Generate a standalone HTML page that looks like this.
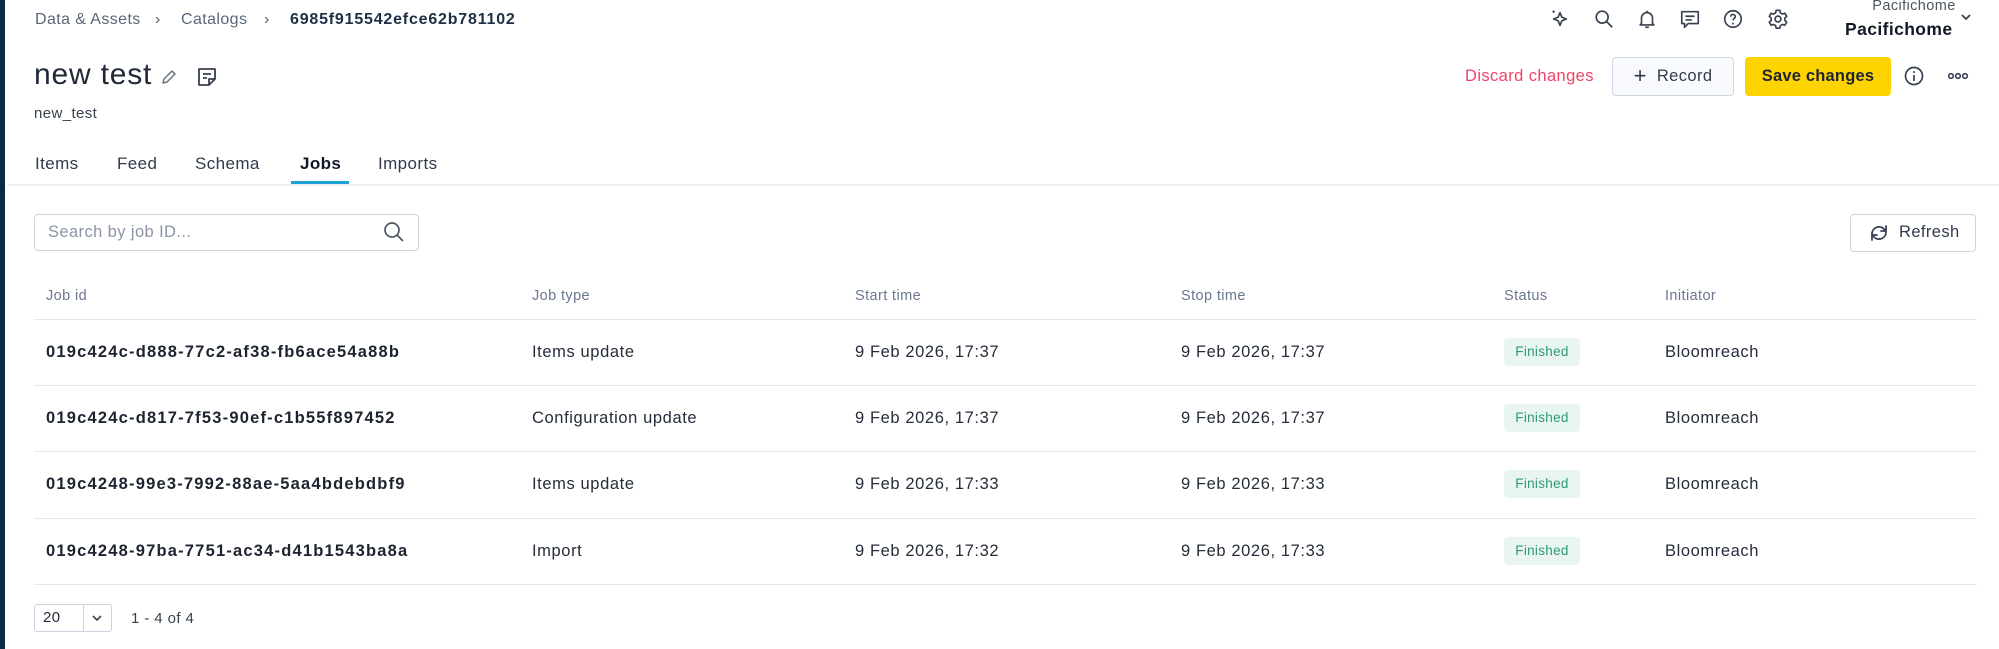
<!DOCTYPE html>
<html><head><meta charset="utf-8"><style>
*{box-sizing:border-box;margin:0;padding:0}
body{width:1999px;height:649px;background:#fff;font-family:"Liberation Sans",sans-serif;color:#1f2937;position:relative;overflow:hidden;letter-spacing:0.4px}
.a{position:absolute;white-space:nowrap}
.bar{left:0;top:0;width:5px;height:649px;background:#0d2a45}
.bc{top:11px;font-size:16px;color:#5b6678}
.ic{position:absolute;top:8px;width:22px;height:22px}
.tab{top:154px;font-size:17px;color:#2f3b4c}
.th{top:288px;font-size:14.5px;color:#6b7790}
.td{font-size:16.5px;color:#252d3a;letter-spacing:0.6px}
.id{font-weight:bold;font-size:16.5px;color:#1d2430;letter-spacing:1.2px}
.line{height:1px;background:#e3e8f0;left:34px;width:1943px}
.badge{left:1504px;width:76px;height:28px;background:#e9f5f1;border-radius:4px;color:#2e9a74;font-size:13.5px;text-align:center;line-height:28px;letter-spacing:0.3px}
</style></head><body>
<div class="a bar"></div>
<div class="a bc" style="left:35px">Data &amp; Assets</div>
<div class="a bc" style="left:155px">›</div>
<div class="a bc" style="left:181px">Catalogs</div>
<div class="a bc" style="left:264px">›</div>
<div class="a bc" style="left:290px;color:#1e2f45;font-weight:bold;letter-spacing:0.8px">6985f915542efce62b781102</div>

<svg class="ic" style="left:1549px" viewBox="0 0 24 24" fill="none" stroke="#374151" stroke-width="1.8" stroke-linejoin="round"><path d="M14 6l2 5 5 2-5 2-2 5-2-5-5-2 5-2z" transform="translate(-2,-1)"/><circle cx="5" cy="4" r="1.3" fill="#374151" stroke="none"/></svg>
<svg class="ic" style="left:1593px" viewBox="0 0 24 24" fill="none" stroke="#374151" stroke-width="1.8"><circle cx="10" cy="10" r="6.5"/><path d="M15 15l6 6"/></svg>
<svg class="ic" style="left:1636px" viewBox="0 0 24 24" fill="none" stroke="#374151" stroke-width="1.8" stroke-linejoin="round"><path d="M6 17V11a6 6 0 0112 0v6l1.5 1.5h-15z"/><path d="M10 21h4"/><path d="M12 3v2"/></svg>
<svg class="ic" style="left:1679px" viewBox="0 0 24 24" fill="none" stroke="#374151" stroke-width="1.8" stroke-linejoin="round"><path d="M3 4h18v13H10l-4 4v-4H3z"/><path d="M7 9h10M7 13h7"/></svg>
<svg class="ic" style="left:1722px" viewBox="0 0 24 24" fill="none" stroke="#374151" stroke-width="1.8"><circle cx="12" cy="12" r="9"/><path d="M9.5 9.5a2.5 2.5 0 115 0c0 2-2.5 2-2.5 4"/><circle cx="12" cy="17" r="1" fill="#374151" stroke="none"/></svg>
<svg class="ic" style="left:1767px" viewBox="0 0 24 24" fill="none" stroke="#374151" stroke-width="1.8" stroke-linejoin="round"><path d="M10 2.5h4l.6 2.8 2.2 1.3 2.7-.9 2 3.4-2.1 1.9v2.5l2.1 1.9-2 3.4-2.7-.9-2.2 1.3-.6 2.8h-4l-.6-2.8-2.2-1.3-2.7.9-2-3.4 2.1-1.9v-2.5L2.5 9.1l2-3.4 2.7.9 2.2-1.3z"/><circle cx="12" cy="12" r="3.2"/></svg>

<div class="a" style="left:1864px;top:-2px;font-size:14.5px;color:#4b5563;width:100px;text-align:center">Pacifichome</div>
<div class="a" style="left:1845px;top:19px;font-size:17.5px;font-weight:bold;color:#111827">Pacifichome</div>
<svg class="a" style="left:1959px;top:12px" width="14" height="10" viewBox="0 0 14 10" fill="none" stroke="#374151" stroke-width="1.8"><path d="M3 3l4 4 4-4"/></svg>

<div class="a" style="left:34px;top:58px;font-size:30px;color:#1f2937;letter-spacing:0.8px">new test</div>
<svg class="a" style="left:160px;top:68px" width="18" height="18" viewBox="0 0 18 18" fill="none" stroke="#6b7280" stroke-width="1.5" stroke-linejoin="round"><path d="M3 15l1-4 8-8 3 3-8 8z"/></svg>
<svg class="a" style="left:196px;top:66px" width="22" height="22" viewBox="0 0 22 22" fill="none" stroke="#374151" stroke-width="1.8" stroke-linejoin="round"><path d="M3 3h16v10l-6 6H3z"/><path d="M13 19v-6h6M7 8h8M7 12h4"/></svg>
<div class="a" style="left:34px;top:105px;font-size:15px;color:#374151">new_test</div>

<div class="a" style="left:1465px;top:67px;font-size:16.5px;color:#ef4469">Discard changes</div>
<div class="a" style="left:1612px;top:57px;width:122px;height:39px;border:1.5px solid #cfd6e4;border-radius:4px;background:#f8fafd;font-size:16.5px;color:#2f3b4c;line-height:36px;text-align:center"><span style="font-size:22px;vertical-align:-2px;margin-right:10px">+</span>Record</div>
<div class="a" style="left:1745px;top:57px;width:146px;height:39px;border-radius:4px;background:#fdd300;font-size:16.5px;font-weight:bold;color:#1f2430;line-height:39px;text-align:center;letter-spacing:0.2px">Save changes</div>
<svg class="a" style="left:1903px;top:65px" width="22" height="22" viewBox="0 0 22 22" fill="none" stroke="#374151" stroke-width="1.7"><circle cx="11" cy="11" r="8.5"/><path d="M11 10v6"/><circle cx="11" cy="7" r="1" fill="#374151" stroke="none"/></svg>
<svg class="a" style="left:1947px;top:70px" width="22" height="12" viewBox="0 0 22 12" fill="none" stroke="#374151" stroke-width="1.6"><circle cx="4" cy="6" r="2.3"/><circle cx="11" cy="6" r="2.3"/><circle cx="18" cy="6" r="2.3"/></svg>

<div class="a tab" style="left:35px">Items</div>
<div class="a tab" style="left:117px">Feed</div>
<div class="a tab" style="left:195px">Schema</div>
<div class="a tab" style="left:300px;color:#111827;font-weight:bold">Jobs</div>
<div class="a tab" style="left:378px">Imports</div>
<div class="a" style="left:7px;top:184px;width:1992px;height:2px;background:#eef2f7"></div>
<div class="a" style="left:291px;top:181px;width:58px;height:3px;background:#1da1d6"></div>

<div class="a" style="left:34px;top:214px;width:385px;height:37px;border:1.5px solid #cbd3e1;border-radius:4px"></div>
<div class="a" style="left:48px;top:223px;font-size:16.5px;color:#8a94a6">Search by job ID...</div>
<svg class="a" style="left:382px;top:220px" width="24" height="24" viewBox="0 0 24 24" fill="none" stroke="#4b5563" stroke-width="1.7"><circle cx="10" cy="10" r="7"/><path d="M15 15l6 6"/></svg>

<div class="a" style="left:1850px;top:214px;width:126px;height:38px;border:1.5px solid #cbd3e1;border-radius:4px;font-size:16.5px;color:#2f3b4c;line-height:35px;padding-left:48px">Refresh</div>
<svg class="a" style="left:1868px;top:222px" width="22" height="22" viewBox="0 0 22 22" fill="none" stroke="#374151" stroke-width="1.8" stroke-linecap="round"><path d="M4 12a7 7 0 0112-5l2 2M18 10a7 7 0 01-12 5l-2-2"/><path d="M18 4v5h-5M4 18v-5h5"/></svg>

<div class="a th" style="left:46px">Job id</div>
<div class="a th" style="left:532px">Job type</div>
<div class="a th" style="left:855px">Start time</div>
<div class="a th" style="left:1181px">Stop time</div>
<div class="a th" style="left:1504px">Status</div>
<div class="a th" style="left:1665px">Initiator</div>
<div class="a line" style="top:319px"></div>

<div class="a td id" style="left:46px;top:343px">019c424c-d888-77c2-af38-fb6ace54a88b</div>
<div class="a td" style="left:532px;top:343px">Items update</div>
<div class="a td" style="left:855px;top:343px">9 Feb 2026, 17:37</div>
<div class="a td" style="left:1181px;top:343px">9 Feb 2026, 17:37</div>
<div class="a badge" style="top:338px">Finished</div>
<div class="a td" style="left:1665px;top:343px">Bloomreach</div>
<div class="a line" style="top:385px"></div>

<div class="a td id" style="left:46px;top:409px">019c424c-d817-7f53-90ef-c1b55f897452</div>
<div class="a td" style="left:532px;top:409px">Configuration update</div>
<div class="a td" style="left:855px;top:409px">9 Feb 2026, 17:37</div>
<div class="a td" style="left:1181px;top:409px">9 Feb 2026, 17:37</div>
<div class="a badge" style="top:404px">Finished</div>
<div class="a td" style="left:1665px;top:409px">Bloomreach</div>
<div class="a line" style="top:451px"></div>

<div class="a td id" style="left:46px;top:475px">019c4248-99e3-7992-88ae-5aa4bdebdbf9</div>
<div class="a td" style="left:532px;top:475px">Items update</div>
<div class="a td" style="left:855px;top:475px">9 Feb 2026, 17:33</div>
<div class="a td" style="left:1181px;top:475px">9 Feb 2026, 17:33</div>
<div class="a badge" style="top:470px">Finished</div>
<div class="a td" style="left:1665px;top:475px">Bloomreach</div>
<div class="a line" style="top:518px"></div>

<div class="a td id" style="left:46px;top:542px">019c4248-97ba-7751-ac34-d41b1543ba8a</div>
<div class="a td" style="left:532px;top:542px">Import</div>
<div class="a td" style="left:855px;top:542px">9 Feb 2026, 17:32</div>
<div class="a td" style="left:1181px;top:542px">9 Feb 2026, 17:33</div>
<div class="a badge" style="top:537px">Finished</div>
<div class="a td" style="left:1665px;top:542px">Bloomreach</div>
<div class="a line" style="top:584px"></div>

<div class="a" style="left:34px;top:604px;width:78px;height:28px;border:1.5px solid #cbd3e1;border-radius:3px"></div>
<div class="a" style="left:83px;top:605px;width:1px;height:26px;background:#cbd3e1"></div>
<div class="a" style="left:43px;top:609px;font-size:15px;color:#252d3a">20</div>
<svg class="a" style="left:91px;top:613px" width="12" height="10" viewBox="0 0 12 10" fill="none" stroke="#374151" stroke-width="1.6"><path d="M2 3l4 4 4-4"/></svg>
<div class="a" style="left:131px;top:610px;font-size:15px;color:#374151">1 - 4 of 4</div>
</body></html>
